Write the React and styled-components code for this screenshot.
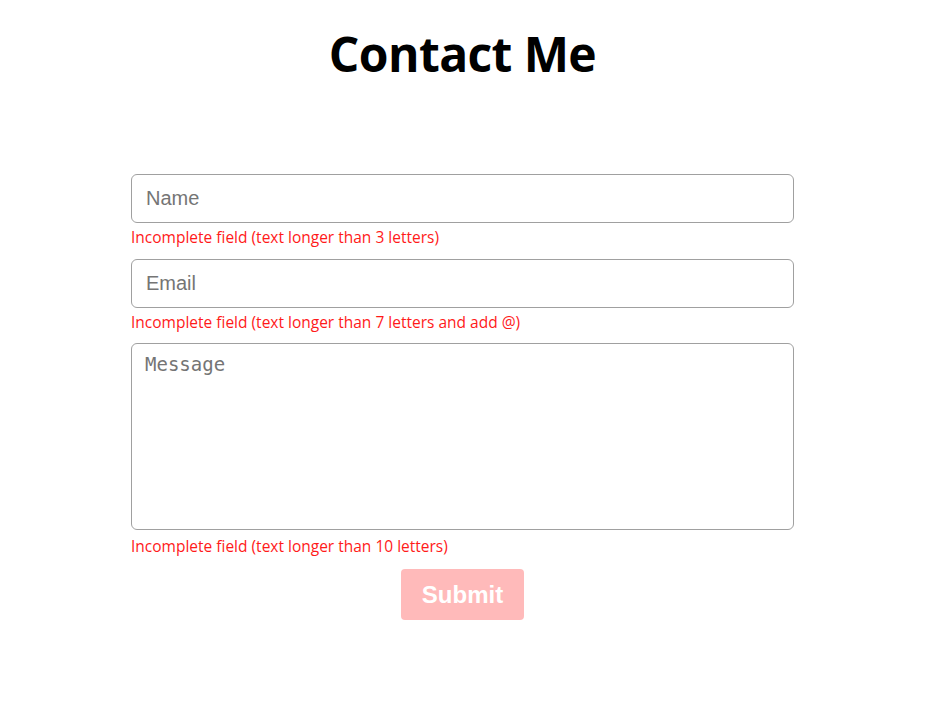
import React from "react";
import styled, { createGlobalStyle } from "styled-components";

const GlobalStyle = createGlobalStyle`
  html, body { margin: 0; padding: 0; background: #ffffff; }
  body { font-family: "Open Sans", "Noto Sans", sans-serif; }
  * { box-sizing: border-box; }
`;

const Page = styled.div`
  width: 925px;
  display: flex;
  flex-direction: column;
  align-items: center;
`;

const Title = styled.h1`
  margin: 22px 0 0;
  font-family: "Open Sans", "Noto Sans", sans-serif;
  font-weight: 700;
  font-size: 48px;
  line-height: 64px;
  color: #000;
  letter-spacing: -0.6px;
`;

const Form = styled.form`
  width: 663px;
  margin-top: 88px;
  display: flex;
  flex-direction: column;
`;

const Field = styled.div`
  display: flex;
  flex-direction: column;
  margin-bottom: ${(p) => p.$gap || 12}px;
`;

const Input = styled.input`
  width: 100%;
  height: 49px;
  border: 1px solid #a0a0a0;
  border-radius: 6px;
  padding: 0 14px;
  font-family: "Liberation Sans", Arial, sans-serif;
  font-size: 20px;
  color: #222;
  outline: none;
  &::placeholder { color: #757575; }
`;

const TextArea = styled.textarea`
  display: block;
  width: 100%;
  height: 187px;
  border: 1px solid #a0a0a0;
  border-radius: 6px;
  padding: 9px 13px;
  font-family: "DejaVu Sans Mono", monospace;
  font-size: 19px;
  resize: none;
  outline: none;
  &::placeholder { color: #757575; }
`;

const ErrorText = styled.span`
  margin-top: ${(p) => p.$top || 4}px;
  font-family: "Open Sans", "Noto Sans", sans-serif;
  font-size: 15.5px;
  line-height: 20px;
  color: #ff1a1a;
`;

const Submit = styled.button`
  align-self: center;
  width: 123px;
  height: 51px;
  border: none;
  border-radius: 4px;
  background: #ffbaba;
  color: #ffffff;
  font-family: "Liberation Sans", Arial, sans-serif;
  font-weight: 700;
  font-size: 24px;
  cursor: default;
`;

export default function App() {
  return (
    <>
      <GlobalStyle />
      <Page>
        <Title>Contact Me</Title>
        <Form onSubmit={(e) => e.preventDefault()}>
          <Field>
            <Input placeholder="Name" />
            <ErrorText>Incomplete field (text longer than 3 letters)</ErrorText>
          </Field>
          <Field $gap={11}>
            <Input placeholder="Email" />
            <ErrorText>Incomplete field (text longer than 7 letters and add @)</ErrorText>
          </Field>
          <Field $gap={13}>
            <TextArea placeholder="Message" />
            <ErrorText $top={6}>Incomplete field (text longer than 10 letters)</ErrorText>
          </Field>
          <Submit type="submit" disabled>Submit</Submit>
        </Form>
      </Page>
    </>
  );
}
